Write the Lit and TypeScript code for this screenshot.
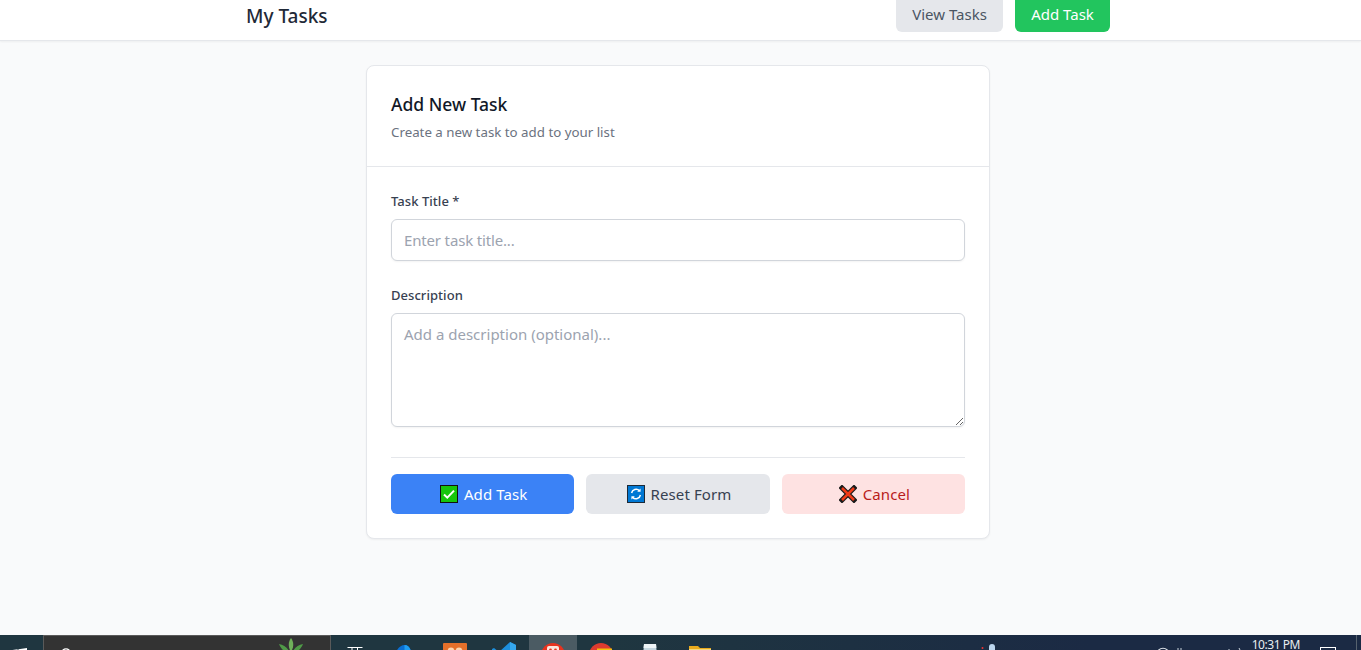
import { LitElement, css, html, svg } from "lit";
import { customElement } from "lit/decorators.js";
import { styleMap } from "lit/directives/style-map.js";

const CHECK_ICON = svg`<rect x="0.5" y="0.5" width="17" height="17" fill="#16c60c" stroke="#111"/><path d="M4 9.5l3.3 3.2L14 5.6" fill="none" stroke="#fff" stroke-width="2"/>`;
const REFRESH_ICON = svg`<rect x="0.5" y="0.5" width="17" height="17" fill="#0078d4" stroke="#1c2a38"/><path d="M4.6 8a4.6 4.6 0 0 1 7.8-2.4M13.4 10a4.6 4.6 0 0 1-7.8 2.4" fill="none" stroke="#fff" stroke-width="1.5"/><path d="M13.6 3.4v3.4h-3.4zM4.4 14.6v-3.4h3.4z" fill="#fff"/>`;
const CROSS_ICON = svg`<path d="M3 3l12 12M15 3L3 15" stroke="#1a1a1a" stroke-width="5" stroke-linecap="square"/><path d="M3 3l12 12M15 3L3 15" stroke="#f03a17" stroke-width="2.6"/>`;

// taskbar apps, only the top few pixels of each show
const TASKBAR_APPS = [
  { width: 45, top: 12, active: false, icon: svg`<path d="M5.5 .5h15M10 .5v9M15.500 .5v9" fill="none" stroke="#fff"/>` },
  { width: 56, top: 10, active: false, icon: svg`<path d="M3 12C4 3 9 0 12.5 0 16 0 19 3 19 8v8H3z" fill="#0a6ed1"/><path d="M12.5 0C16 0 19 3 19 8v4h-6.500z" fill="#1f9cf0"/>` },
  { width: 46, top: 8, active: false, icon: svg`<rect width="24" height="24" rx="1" fill="#e5702a"/><circle cx="8" cy="8" r="3.4" fill="#fbd5b0"/><circle cx="16" cy="8" r="3.4" fill="#fbd5b0"/>` },
  { width: 51, top: 7, active: false, icon: svg`<path d="M18 0l6 3v18l-6 3L7 14l-5 4-2-1V7l2-1 5 4z" fill="#1d8fdc"/><path d="M18 0l6 3v18l-6 3z" fill="#35a8ee"/>` },
  { width: 48, top: 8, active: true, icon: svg`<circle cx="12" cy="12" r="12" fill="#e8331f"/><rect x="6" y="3" width="12" height="9" rx="2" fill="#fde4dc"/><circle cx="9.500" cy="7" r="1.400" fill="#e8331f"/><circle cx="14.500" cy="7" r="1.400" fill="#e8331f"/>` },
  { width: 48, top: 8, active: false, icon: svg`<circle cx="12" cy="12" r="12" fill="#dd3b2f"/><path d="M8 6.500h15" stroke="#f4c20d" stroke-width="2"/><circle cx="12" cy="12" r="5" fill="#fff"/>` },
  { width: 50, top: 9, active: false, icon: svg`<path d="M6 0h12l2 24H4z" fill="#c4d6df"/><path d="M6 0h12l.4 4H5.500z" fill="#eef4f7"/>` },
  { width: 50, top: 11, active: false, icon: svg`<path d="M1 0h9l2 2h11v20H1z" fill="#e8a91c"/><rect x="1" y="3" width="22" height="18" fill="#f5d77a"/>` },
];

@customElement("app-root")
export class AppRoot extends LitElement {
  static styles = css`
    :host {
      display: block;
      position: relative;
      height: 650px;
      overflow: hidden;
      background: #f9fafb;
      font-family: "Noto Sans", "Open Sans", sans-serif;
      color: #111827;
    }
    .nav {
      height: 41px;
      box-sizing: border-box;
      background: #fff;
      border-bottom: 1px solid #e5e7eb;
      box-shadow: 0 1px 2px rgba(0, 0, 0, 0.05);
      padding: 0 251px 0 246px;
      display: flex;
      justify-content: space-between;
      align-items: flex-end;
      overflow: hidden;
    }
    .brand {
      font-size: 19px;
      font-weight: 500;
      color: #1f2937;
      margin-bottom: 11px;
    }
    .nav-links {
      display: flex;
      gap: 12px;
      margin-bottom: 8px;
    }
    .nav-btn {
      height: 40px;
      display: flex;
      align-items: center;
      justify-content: center;
      padding-top: 4px;
      box-sizing: border-box;
      border-radius: 6px;
      font-size: 15px;
    }
    .nav-view {
      width: 107px;
      background: #e5e7eb;
      color: #4b5563;
    }
    .nav-add {
      width: 95px;
      background: #22c55e;
      color: #fff;
    }
    .card {
      width: 624px;
      box-sizing: border-box;
      margin: 24px 0 0 366px;
      height: 474px;
      background: #fff;
      border: 1px solid #e5e7eb;
      border-radius: 8px;
      box-shadow: 0 1px 2px rgba(0, 0, 0, 0.05);
    }
    .card-head {
      height: 101px;
      box-sizing: border-box;
      padding: 26px 24px 0;
      border-bottom: 1px solid #e5e7eb;
    }
    h1 {
      margin: 0;
      font-size: 17.5px;
      line-height: 24px;
      font-weight: 500;
      color: #111827;
    }
    .sub {
      margin: 6px 0 0;
      font-size: 13.3px;
      line-height: 20px;
      color: #6b7280;
    }
    .form {
      padding: 24px 24px 0;
    }
    label {
      display: block;
      font-size: 13px;
      line-height: 20px;
      font-weight: 500;
      letter-spacing: 0.05px;
      color: #374151;
      margin-bottom: 8px;
    }
    .field {
      display: block;
      width: 100%;
      box-sizing: border-box;
      border: 1px solid #d1d5db;
      border-radius: 6px;
      background: #fff;
      box-shadow: 0 1px 2px rgba(0, 0, 0, 0.05);
      font: inherit;
      font-size: 15px;
      padding: 8px 12px;
      color: #111827;
      outline: none;
      margin: 0;
    }
    .field::placeholder {
      color: #9ca3af;
      opacity: 1;
    }
    input.field {
      height: 42px;
      margin-bottom: 24px;
      letter-spacing: -0.16px;
    }
    textarea.field {
      height: 114px;
      line-height: 24px;
      resize: vertical;
    }
    .actions {
      margin-top: 30px;
      padding-top: 16px;
      border-top: 1px solid #e5e7eb;
      display: grid;
      grid-template-columns: repeat(3, 1fr);
      gap: 12px;
    }
    .action {
      height: 40px;
      display: flex;
      align-items: center;
      justify-content: center;
      gap: 6px;
      border: 0;
      border-radius: 6px;
      font: inherit;
      font-size: 15px;
      letter-spacing: 0.1px;
      padding: 0 0 0 2px;
    }
    .action svg {
      width: 18px;
      height: 18px;
      flex: none;
    }
    .primary {
      background: #3b82f6;
      color: #fff;
    }
    .secondary {
      background: #e5e7eb;
      color: #374151;
    }
    .danger {
      background: #fee2e2;
      color: #b91c1c;
    }
    .taskbar {
      position: absolute;
      left: 0;
      right: 0;
      bottom: 0;
      height: 15px;
      overflow: hidden;
      display: flex;
      background: linear-gradient(90deg, #1f3640 0%, #1f3640 45%, #1b2a44 80%, #1b2a44 100%);
    }
    .tb-start {
      width: 43px;
      flex: none;
      padding: 12px 0 0 11px;
      box-sizing: border-box;
    }
    .tb-search {
      width: 288px;
      flex: none;
      box-sizing: border-box;
      background: #333;
      border: 1px solid #5a5a5a;
      border-bottom: 0;
      display: flex;
      justify-content: space-between;
      padding: 2px 23px 0 15px;
    }
    .tb-lens {
      margin-top: 9px;
    }
    .tb-cell {
      flex: none;
      display: flex;
      justify-content: center;
      box-sizing: border-box;
    }
    .tb-cell.active {
      background: #4b5b63;
    }
    .tb-gap {
      flex: 1;
    }
    .tb-tray {
      display: flex;
      align-items: flex-start;
      color: #fff;
    }
    .tb-mic {
      margin: 9px 161px 0 0;
    }
    .tb-marks {
      margin: 12px 6px 0 0;
    }
    .clock {
      font-size: 12px;
      line-height: 10px;
      letter-spacing: -0.45px;
      margin: 5px 20px 0 0;
      color: #e8edf0;
    }
    .tb-notify {
      margin: 12px 20px 0 0;
    }
    .tb-edge {
      width: 1px;
      height: 15px;
      margin-right: 4px;
      background: #56626e;
    }
  `;

  render() {
    return html`
      <header class="nav">
        <div class="brand">My Tasks</div>
        <div class="nav-links">
          <div class="nav-btn nav-view">View Tasks</div>
          <div class="nav-btn nav-add">Add Task</div>
        </div>
      </header>
      <main class="card">
        <div class="card-head">
          <h1>Add New Task</h1>
          <p class="sub">Create a new task to add to your list</p>
        </div>
        <div class="form">
          <label>Task Title *</label>
          <input class="field" placeholder="Enter task title..." />
          <label>Description</label>
          <textarea class="field" placeholder="Add a description (optional)..."></textarea>
          <div class="actions">
            <button class="action primary"><svg viewBox="0 0 18 18">${CHECK_ICON}</svg>Add Task</button>
            <button class="action secondary"><svg viewBox="0 0 18 18">${REFRESH_ICON}</svg>Reset Form</button>
            <button class="action danger"><svg viewBox="0 0 18 18">${CROSS_ICON}</svg>Cancel</button>
          </div>
        </div>
      </main>
      <footer class="taskbar">
        <div class="tb-start">
          <svg width="16" height="16" viewBox="0 0 16 16"><path d="M0 2.200l6.600-.9v6.200H0zM7.400 1.200L16 0v7.500H7.400zM0 8.400h6.600v6.200L0 13.700zM7.400 8.400H16V16l-8.600-1.200z" fill="#fff"/></svg>
        </div>
        <div class="tb-search">
          <svg class="tb-lens" width="14" height="14" viewBox="0 0 14 14"><circle cx="7" cy="6" r="4.200" fill="none" stroke="#fff" stroke-width="1.200"/></svg>
          <svg width="32" height="24" viewBox="0 0 32 24"><path d="M16 0c3 4 3 9 0 14-3-5-3-10 0-14z" fill="#6fb05a"/><path d="M4 6c5 1 9 4 11 9-5 0-9-4-11-9zM28 6c-5 1-9 4-11 9 5 0 9-4 11-9z" fill="#4f9a47"/></svg>
        </div>
        ${TASKBAR_APPS.map(
          (app) => html`<div
            class="tb-cell ${app.active ? "active" : ""}"
            style=${styleMap({ width: `${app.width}px` })}
          >
            <svg width="24" height="24" viewBox="0 0 24 24" style=${styleMap({ marginTop: `${app.top}px` })}>${app.icon}</svg>
          </div>`,
        )}
        <div class="tb-gap"></div>
        <div class="tb-tray">
          <svg class="tb-mic" width="16" height="15" viewBox="0 0 16 15"><rect x="8" y="0" width="6" height="12" rx="3" fill="#bcd6ee"/><circle cx="1.500" cy="4" r="1" fill="#e33"/></svg>
          <svg class="tb-marks" width="88" height="4" viewBox="0 0 88 4"><path d="M0.500 3Q5 -0.500 9.500 3" fill="none" stroke="#dfe5ea" stroke-width="1.100"/><path d="M20 1v3M23 1v3M71 2v2M81 1l1.500 3" fill="none" stroke="#c9d2da"/></svg>
          <div class="clock">10:31 PM</div>
          <svg class="tb-notify" width="16" height="15" viewBox="0 0 16 15"><rect x="0.500" y="0.500" width="15" height="13" fill="none" stroke="#fff"/></svg>
          <div class="tb-edge"></div>
        </div>
      </footer>
    `;
  }
}
